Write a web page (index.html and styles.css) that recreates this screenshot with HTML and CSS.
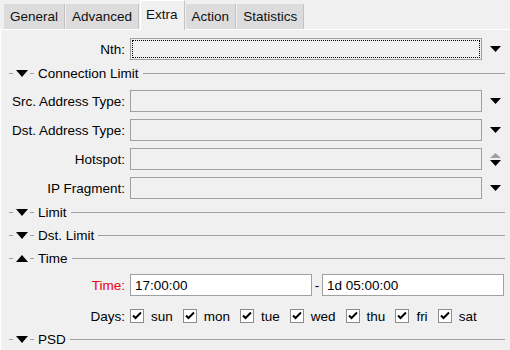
FILE: index.html
```html
<!DOCTYPE html>
<html>
  <head>
    <title>Firewall Rule</title>
    <link rel="stylesheet" href="styles.css">
  </head>
  <body>
    <div class="tabs">
      <div class="tab">General</div>
      <div class="tab">Advanced</div>
      <div class="tab active">Extra</div>
      <div class="tab">Action</div>
      <div class="tab">Statistics</div>
    </div>

    <div class="panel">
      <div class="row first">
        <label>Nth:</label>
        <input class="field focus" type="text" value="">
        <svg class="arrow" width="11" height="6" viewBox="0 0 11 6"><path d="M0 0h11L5.5 6z"/></svg>
      </div>

      <div class="group conn">
        <span class="dash"></span>
        <svg class="tri" width="12" height="7" viewBox="0 0 12 7"><path d="M0 0h12L6 7z"/></svg>
        <span class="dash short"></span>
        <span class="title">Connection Limit</span>
        <span class="line"></span>
      </div>

      <div class="row after-group">
        <label>Src. Address Type:</label>
        <input class="field" type="text" value="">
        <svg class="arrow" width="11" height="6" viewBox="0 0 11 6"><path d="M0 0h11L5.5 6z"/></svg>
      </div>
      <div class="row">
        <label>Dst. Address Type:</label>
        <input class="field" type="text" value="">
        <svg class="arrow" width="11" height="6" viewBox="0 0 11 6"><path d="M0 0h11L5.5 6z"/></svg>
      </div>
      <div class="row">
        <label>Hotspot:</label>
        <input class="field" type="text" value="">
        <svg class="spin" width="11" height="13" viewBox="0 0 11 13"><path fill="#a0a0a0" d="M5.5 0L11 5H0z"/><path d="M0 7h11L5.5 13z"/></svg>
      </div>
      <div class="row">
        <label>IP Fragment:</label>
        <input class="field" type="text" value="">
        <svg class="arrow" width="11" height="6" viewBox="0 0 11 6"><path d="M0 0h11L5.5 6z"/></svg>
      </div>

      <div class="group limit">
        <span class="dash"></span>
        <svg class="tri" width="12" height="7" viewBox="0 0 12 7"><path d="M0 0h12L6 7z"/></svg>
        <span class="dash short"></span>
        <span class="title">Limit</span>
        <span class="line"></span>
      </div>
      <div class="group">
        <span class="dash"></span>
        <svg class="tri" width="12" height="7" viewBox="0 0 12 7"><path d="M0 0h12L6 7z"/></svg>
        <span class="dash short"></span>
        <span class="title">Dst. Limit</span>
        <span class="line"></span>
      </div>
      <div class="group">
        <span class="dash"></span>
        <svg class="tri" width="12" height="7" viewBox="0 0 12 7"><path d="M6 0L12 7H0z"/></svg>
        <span class="dash short"></span>
        <span class="title">Time</span>
        <span class="line"></span>
      </div>

      <div class="row time">
        <label class="red">Time:</label>
        <input class="field white half" type="text" value="17:00:00">
        <span class="sep">-</span>
        <input class="field white half" type="text" value="1d 05:00:00">
      </div>

      <div class="row days">
        <label>Days:</label>
        <div class="checks">
          <span class="check"><svg width="12" height="12" viewBox="0 0 12 12"><path d="M2 5.5l2.5 2.5L10 2.5" fill="none" stroke="#000" stroke-width="2"/></svg></span><span class="day">sun</span>
          <span class="check"><svg width="12" height="12" viewBox="0 0 12 12"><path d="M2 5.5l2.5 2.5L10 2.5" fill="none" stroke="#000" stroke-width="2"/></svg></span><span class="day">mon</span>
          <span class="check"><svg width="12" height="12" viewBox="0 0 12 12"><path d="M2 5.5l2.5 2.5L10 2.5" fill="none" stroke="#000" stroke-width="2"/></svg></span><span class="day">tue</span>
          <span class="check"><svg width="12" height="12" viewBox="0 0 12 12"><path d="M2 5.5l2.5 2.5L10 2.5" fill="none" stroke="#000" stroke-width="2"/></svg></span><span class="day">wed</span>
          <span class="check"><svg width="12" height="12" viewBox="0 0 12 12"><path d="M2 5.5l2.5 2.5L10 2.5" fill="none" stroke="#000" stroke-width="2"/></svg></span><span class="day">thu</span>
          <span class="check"><svg width="12" height="12" viewBox="0 0 12 12"><path d="M2 5.5l2.5 2.5L10 2.5" fill="none" stroke="#000" stroke-width="2"/></svg></span><span class="day">fri</span>
          <span class="check"><svg width="12" height="12" viewBox="0 0 12 12"><path d="M2 5.5l2.5 2.5L10 2.5" fill="none" stroke="#000" stroke-width="2"/></svg></span><span class="day">sat</span>
        </div>
      </div>

      <div class="group last">
        <span class="dash"></span>
        <svg class="tri" width="12" height="7" viewBox="0 0 12 7"><path d="M0 0h12L6 7z"/></svg>
        <span class="dash short"></span>
        <span class="title">PSD</span>
        <span class="line"></span>
      </div>
    </div>
  </body>
</html>
```

FILE: styles.css
```css
body {
  font-family: "Liberation Sans", Arial, sans-serif;
  font-size: 13.5px;
  color: #000;
  background-color: #f0f0f0;
  margin: 0;
  padding: 0;
  overflow: hidden;
}

.tabs {
  display: flex;
  align-items: flex-end;
  height: 29px;
  padding-left: 4px;
}

.tab {
  height: 25px;
  line-height: 25px;
  padding: 0 6px;
  background-color: #dcdcdc;
  border-right: 1px solid #c2c2c2;
  margin-right: 1px;
  color: #101010;
}

.tab.active {
  height: 30px;
  line-height: 27px;
  margin-bottom: -1px;
  padding: 0 6px 0 5px;
  background-color: #f0f0f0;
  border-left: 1px solid #fff;
  border-top: 1px solid #fff;
  box-sizing: border-box;
  position: relative;
}

.panel {
  border-top: 1px solid #fff;
  border-left: 1px solid #fff;
  height: 321px;
  box-sizing: border-box;
}

.row {
  display: flex;
  align-items: center;
  height: 22px;
  margin-top: 7px;
}

.row.first {
  margin-top: 8px;
}

.row.after-group {
  margin-top: 5px;
}

.row label {
  width: 124px;
  text-align: right;
  margin-right: 5px;
}

.field {
  width: 352px;
  height: 22px;
  box-sizing: border-box;
  border: 1px solid #a0a0a0;
  background-color: #f0f0f0;
  font-family: "Liberation Sans", Arial, sans-serif;
  font-size: 13.5px;
  color: #000;
  padding: 0 4px;
  margin: 0;
}

.field.focus {
  outline: 1px dotted #000;
  outline-offset: -3px;
}

.field.white {
  background-color: #fff;
}

.field.half {
  width: 182px;
}

.sep {
  width: 10px;
  text-align: center;
}

.arrow {
  margin-left: 8px;
}

.spin {
  margin-left: 8px;
}

.red {
  color: #e60012;
}

.row.time {
  margin-top: 4px;
}

.row.days {
  margin-top: 9px;
}

.checks {
  display: flex;
  align-items: center;
}

.check {
  width: 14px;
  height: 14px;
  box-sizing: border-box;
  border: 1px solid #8c8c8c;
  background-color: #fff;
  display: flex;
  align-items: center;
  justify-content: center;
}

.day {
  margin-left: 7px;
  margin-right: 10px;
}

.group {
  display: flex;
  align-items: center;
  height: 23px;
}

.group.conn {
  margin-top: 2px;
}

.group.limit {
  margin-top: 1px;
  height: 24px;
}

.group.last {
  margin-top: 1px;
  height: 22px;
}

.dash {
  width: 4px;
  height: 1px;
  background-color: #a0a0a0;
  margin-left: 8px;
}

.dash.short {
  margin-left: 2px;
}

.tri {
  margin-left: 3px;
}

.title {
  margin-left: 4px;
}

.line {
  flex: 1;
  height: 1px;
  background-color: #a0a0a0;
  margin-left: 4px;
  margin-right: 5px;
}
```
